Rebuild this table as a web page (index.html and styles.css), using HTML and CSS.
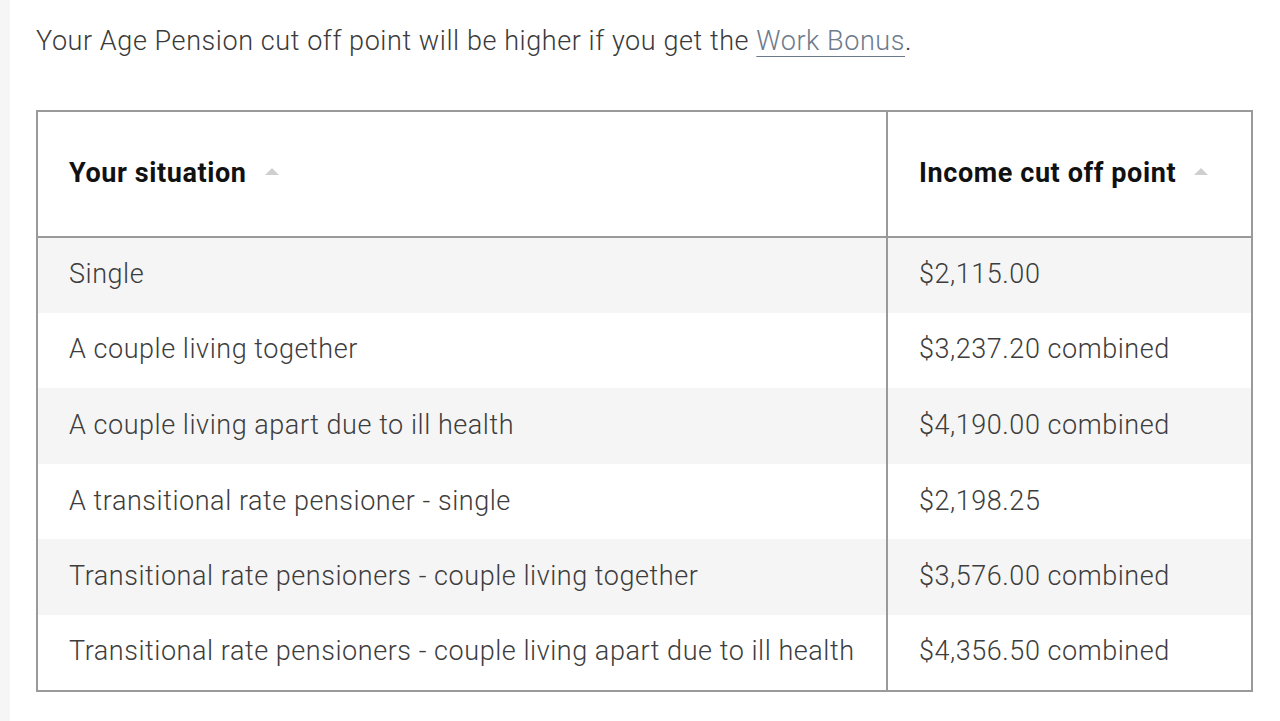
FILE: index.html
```html
<!DOCTYPE html>
<html lang="en">
<head>
<meta charset="utf-8">
<title>Age Pension cut off points</title>
<link rel="stylesheet" href="styles.css">
</head>
<body>
<div class="page">
  <div class="stripe"></div>
  <main class="content">
    <p class="intro">Your Age Pension cut off point will be higher if you get the <a href="#" class="link">Work Bonus</a>.</p>
    <table class="table">
      <thead>
        <tr>
          <th class="col1"><span class="th-label">Your situation</span><span class="sort"></span></th>
          <th class="col2"><span class="th-label">Income cut off point</span><span class="sort"></span></th>
        </tr>
      </thead>
      <tbody>
        <tr class="alt"><td>Single</td><td>$2,115.00</td></tr>
        <tr><td>A couple living together</td><td>$3,237.20 combined</td></tr>
        <tr class="alt"><td>A couple living apart due to ill health</td><td>$4,190.00 combined</td></tr>
        <tr><td>A transitional rate pensioner - single</td><td>$2,198.25</td></tr>
        <tr class="alt"><td>Transitional rate pensioners - couple living together</td><td>$3,576.00 combined</td></tr>
        <tr><td>Transitional rate pensioners - couple living apart due to ill health</td><td>$4,356.50 combined</td></tr>
      </tbody>
    </table>
  </main>
</div>
</body>
</html>
```

FILE: styles.css
```css
* { box-sizing: border-box; }
html, body { margin: 0; padding: 0; background: #fff; }
body {
  font-family: Roboto, "Liberation Sans", sans-serif;
  font-weight: 300;
  color: #3a3a3a;
}
.page {
  display: flex;
  min-height: 721px;
}
.stripe {
  width: 10px;
  flex: 0 0 10px;
  background: #f6f6f6;
}
.content {
  flex: 1;
  padding: 0 26px 0 26px;
}
.intro {
  margin: 0;
  padding-top: 24px;
  font-size: 27px;
  line-height: 34px;
  letter-spacing: 0.58px;
}
.link {
  color: #6d7a8c;
  text-decoration: underline;
  text-decoration-color: #6d7a8c;
  text-underline-offset: 6px;
  text-decoration-thickness: 1px;
}
.table {
  margin-top: 52px;
  width: 1217px;
  border-collapse: collapse;
  border: 2px solid #9a9a9a;
  font-size: 27px;
  letter-spacing: 0.55px;
}
.table th, .table td {
  text-align: left;
  padding: 0 0 0 31px;
}
.table th {
  height: 126px;
  padding-bottom: 5px;
  font-weight: 700;
  color: #111;
  border-bottom: 2px solid #9a9a9a;
  letter-spacing: 0.6px;
}
.col1 { width: 850px; border-right: 2px solid #9a9a9a; }
.table td {
  height: 75.6px;
  padding-bottom: 2px;
  color: #3d3d3d;
}
.table td:first-child { border-right: 2px solid #9a9a9a; }
.alt td { background: #f5f5f5; }
.th-label { vertical-align: middle; }
.sort {
  display: inline-block;
  vertical-align: middle;
  margin-left: 18px;
  width: 0;
  height: 0;
  border-left: 7px solid transparent;
  border-right: 7px solid transparent;
  border-bottom: 7px solid #cfcfcf;
  position: relative;
  top: -1px;
}
```
